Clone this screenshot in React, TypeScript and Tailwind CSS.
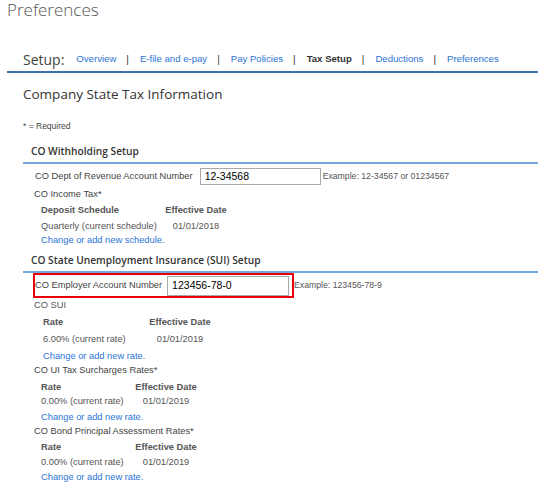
import React from "react";

const body = "font-['Liberation_Sans',Arial,sans-serif]";
const open = "font-['Open_Sans',sans-serif]";

function RateTable({
  col1,
  head1,
  head2,
  val1,
  val2,
  link,
  pl,
  rowGap,
}: {
  col1: number;
  head1: string;
  head2: string;
  val1: string;
  val2: string;
  link: string;
  pl: string;
  rowGap: string[];
}) {
  return (
    <div className={pl}>
      <div className={`flex h-[14px] items-center whitespace-nowrap font-bold text-[#555] ${rowGap[0]}`}>
        <div style={{ width: col1 }}>{head1}</div>
        <div className="w-[62px] text-center">{head2}</div>
      </div>
      <div className={`flex h-[14px] items-center whitespace-nowrap text-[#555] ${rowGap[1]}`}>
        <div style={{ width: col1 }}>{val1}</div>
        <div className="w-[62px] text-center">{val2}</div>
      </div>
      <div className={`flex h-[14px] items-center whitespace-nowrap text-[#2b74d6] ${rowGap[2]}`}>
        <a href="#" className="text-[#2b74d6]">{link}</a>
      </div>
    </div>
  );
}

export default function App() {
  const navItems = [
    { t: "Overview" },
    { t: "E-file and e-pay" },
    { t: "Pay Policies" },
    { t: "Tax Setup", active: true },
    { t: "Deductions" },
    { t: "Preferences" },
  ];
  return (
    <div className={`w-[538px] min-h-[482px] bg-white ${body} text-[9.3px] text-[#444] whitespace-nowrap`}>
      {/* Title */}
      <div className={`${open} font-light text-[17px] leading-[20px] h-[20px] pl-[7px] text-[#555]`}>
        Preferences
      </div>

      {/* Setup nav */}
      <div className="ml-[7px] mt-[30px] border-b-2 border-[#3f72ab] pb-[3px]">
        <div className="flex h-[18px] items-center pl-[16px]">
          <span className={`${open} text-[14px] text-[#444] mr-[12px]`}>Setup:</span>
          {navItems.map((n, i) => (
            <React.Fragment key={n.t}>
              {i > 0 && <span className="text-[10px] text-[#333] ml-[10px] mr-[11px]">|</span>}
              {n.active ? (
                <span className="text-[9.6px] font-bold text-[#333]">{n.t}</span>
              ) : (
                <a href="#" className="text-[9.6px] text-[#2b74d6]">{n.t}</a>
              )}
            </React.Fragment>
          ))}
        </div>
      </div>

      {/* Company heading */}
      <div className={`${open} mt-[12px] h-[18px] flex items-center pl-[23px] text-[13.5px] text-[#333]`}>
        Company State Tax Information
      </div>

      <div className="mt-[16px] h-[14px] flex items-center pl-[23px] text-[8.5px] text-[#444]">
        * = Required
      </div>

      {/* Withholding */}
      <div className="ml-[23px] mt-[11px] border-b-2 border-[#73a9dc] pb-[2px]">
        <div className={`${open} h-[16px] flex items-center pl-[8px] text-[10.2px] font-semibold text-[#333]`}>
          CO Withholding Setup
        </div>
      </div>

      <div className="mt-[4px] flex h-[17px] items-center pl-[35px]">
        <span className="text-[#444]">CO Dept of Revenue Account Number</span>
        <div className="ml-[7px] flex h-[17px] w-[121px] items-center border border-[#a9a9a9] px-[4px] text-[10.5px] text-black">
          12-34568
        </div>
        <span className="ml-[2px] text-[8.7px] text-[#555]">Example: 12-34567 or 01234567</span>
      </div>

      <div className="mt-[3px] h-[14px] flex items-center pl-[34px] text-[#444]">CO Income Tax*</div>

      <RateTable
        pl="pl-[41px]"
        col1={124}
        head1="Deposit Schedule"
        head2="Effective Date"
        val1="Quarterly (current schedule)"
        val2="01/01/2018"
        link="Change or add new schedule."
        rowGap={["mt-[2px]", "mt-[2px]", "mt-0"]}
      />

      {/* SUI */}
      <div className="ml-[23px] mt-[5px] border-b-2 border-[#73a9dc] pb-[2px]">
        <div className={`${open} h-[16px] flex items-center pl-[8px] text-[10.2px] font-semibold text-[#333]`}>
          CO State Unemployment Insurance (SUI) Setup
        </div>
      </div>

      <div className="flex items-center pl-[33px]">
        <div className="flex h-[25px] w-[261px] items-center border-2 border-[#e8000b]">
          <span className="text-[#444]">CO Employer Account Number</span>
          <div className="ml-[5px] flex h-[20px] w-[122px] items-center border border-[#a9a9a9] px-[4px] text-[10.5px] text-black">
            123456-78-0
          </div>
        </div>
        <span className="text-[8.7px] text-[#555]">Example: 123456-78-9</span>
      </div>

      <div className="mt-[1px] h-[14px] flex items-center pl-[34px] text-[#555]">CO SUI</div>

      <RateTable
        pl="pl-[43px]"
        col1={106}
        head1="Rate"
        head2="Effective Date"
        val1="6.00% (current rate)"
        val2="01/01/2019"
        link="Change or add new rate."
        rowGap={["mt-[3px]", "mt-[3px]", "mt-[3px]"]}
      />

      <div className="h-[14px] flex items-center pl-[34px] text-[#444]">CO UI Tax Surcharges Rates*</div>

      <RateTable
        pl="pl-[41px]"
        col1={94}
        head1="Rate"
        head2="Effective Date"
        val1="0.00% (current rate)"
        val2="01/01/2019"
        link="Change or add new rate."
        rowGap={["mt-[3px]", "mt-0", "mt-[2px]"]}
      />

      <div className="h-[14px] flex items-center pl-[34px] text-[#444]">CO Bond Principal Assessment Rates*</div>

      <RateTable
        pl="pl-[41px]"
        col1={94}
        head1="Rate"
        head2="Effective Date"
        val1="0.00% (current rate)"
        val2="01/01/2019"
        link="Change or add new rate."
        rowGap={["mt-[2px]", "mt-[1px]", "mt-[1px]"]}
      />
    </div>
  );
}
